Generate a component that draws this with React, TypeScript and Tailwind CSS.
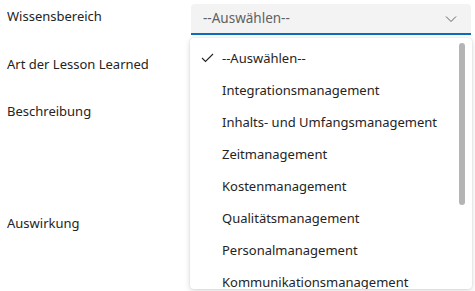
import React from "react";

const items = [
  "--Auswählen--",
  "Integrationsmanagement",
  "Inhalts- und Umfangsmanagement",
  "Zeitmanagement",
  "Kostenmanagement",
  "Qualitätsmanagement",
  "Personalmanagement",
  "Kommunikationsmanagement",
];

export default function App() {
  return (
    <div
      className="relative w-[475px] h-[291px] bg-white overflow-hidden text-[13px] text-[#242424]"
      style={{ fontFamily: '"Noto Sans", "Open Sans", sans-serif' }}
    >
      <div className="flex">
        <div className="w-[191px] pl-[7px] flex flex-col leading-[20px]">
          <div className="h-[48px] pt-[6px]">Wissensbereich</div>
          <div className="h-[47px] pt-[6px]">Art der Lesson Learned</div>
          <div className="h-[112px] pt-[6px]">Beschreibung</div>
          <div className="h-[48px] pt-[6px]">Auswirkung</div>
        </div>
        <div className="flex-1 pt-[4px] pr-[4px]">
          <div className="h-[31px] bg-[#f3f3f3] rounded-t-[4px] border-b-2 border-[#0f6cbd] flex items-center justify-between pl-[12px] pr-[14px]">
            <span className="text-[#616161] text-[13.5px]">--Auswählen--</span>
            <svg width="12" height="8" viewBox="0 0 12 8" fill="none">
              <path d="M1 1.5 L6 6.5 L11 1.5" stroke="#616161" strokeWidth="1" />
            </svg>
          </div>
        </div>
      </div>
      <div className="absolute left-[190px] top-[38px] w-[282px] h-[251px] bg-white rounded-[4px] shadow-[0_0_2px_rgba(0,0,0,0.12),0_2px_6px_rgba(0,0,0,0.14)] overflow-hidden">
        <div className="pt-[4px]">
          {items.map((it, i) => (
            <div key={it} className="relative h-[32px] flex items-center pl-[32px] leading-[20px]">
              {i === 0 && (
                <svg className="absolute left-[11px] top-[11px]" width="13" height="10" viewBox="0 0 13 10" fill="none">
                  <path d="M1 5 L4.5 8.5 L12 1" stroke="#242424" strokeWidth="1.1" />
                </svg>
              )}
              <span className="whitespace-nowrap">{it}</span>
            </div>
          ))}
        </div>
        <div className="absolute left-[269px] top-[5px] w-[6px] h-[162px] rounded-full bg-[#b4b4b4]" />
      </div>
    </div>
  );
}
